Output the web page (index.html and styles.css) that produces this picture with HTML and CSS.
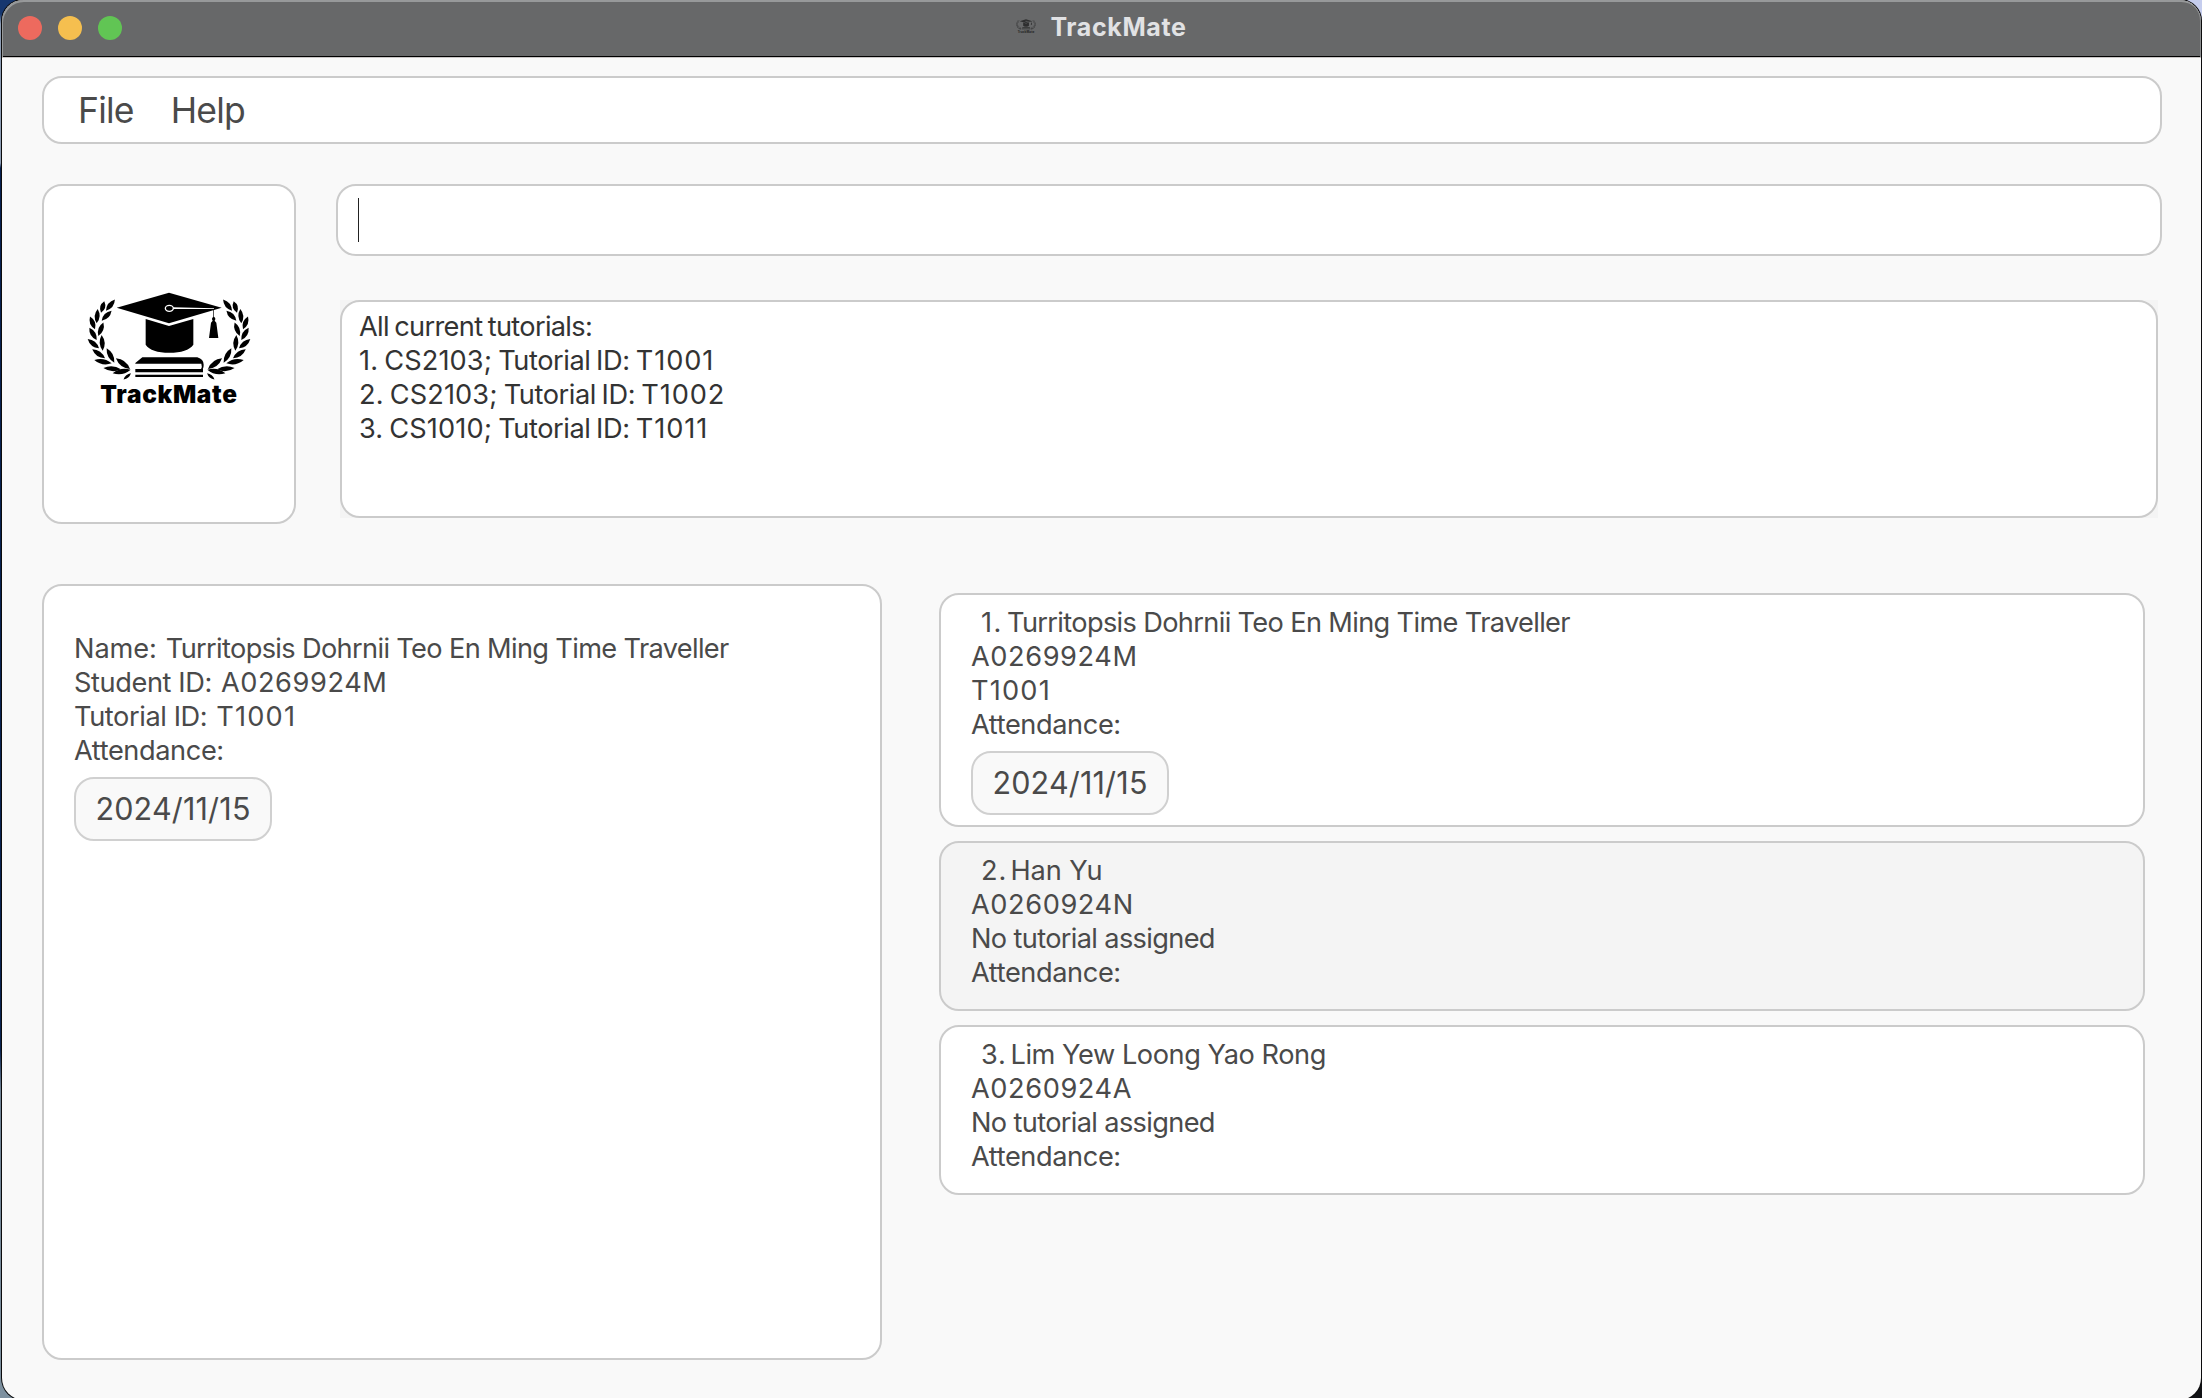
FILE: index.html
```html
<!DOCTYPE html>
<html lang="en">
<head>
<meta charset="utf-8">
<title>TrackMate</title>
<link rel="stylesheet" href="styles.css">
</head>
<body>
<svg class="defs" width="0" height="0" aria-hidden="true">
  <defs>
    <path id="leaf" d="M0 0Q50 -15 100 0Q50 15 0 0Z"/>
    <g id="branch">
      <use href="#leaf" transform="translate(138 122) rotate(-51.5) scale(.43 1)"/>
      <use href="#leaf" transform="translate(123 128) rotate(-74) scale(.36 1)"/>
      <use href="#leaf" transform="translate(125 152) rotate(-45) scale(.42 1)"/>
      <use href="#leaf" transform="translate(110 160) rotate(-86) scale(.43 1)"/>
      <use href="#leaf" transform="translate(105 178) rotate(-111.5) scale(.41 1)"/>
      <use href="#leaf" transform="translate(115 198) rotate(-69.4) scale(.43 1)"/>
      <use href="#leaf" transform="translate(110 210) rotate(-120.7) scale(.43 1)"/>
      <use href="#leaf" transform="translate(128 242) rotate(-93.7) scale(.47 1)"/>
      <use href="#leaf" transform="translate(117 235) rotate(-140.5) scale(.44 1)"/>
      <use href="#leaf" transform="translate(135 265) rotate(-144.6) scale(.47 1)"/>
      <use href="#leaf" transform="translate(163 278) rotate(-118) scale(.49 1)"/>
      <use href="#leaf" transform="translate(155 280) rotate(-169) scale(.53 1)"/>
      <use href="#leaf" transform="translate(210 297) rotate(-142.7) scale(.53 1.1)"/>
      <use href="#leaf" transform="translate(183 298) rotate(-175.7) scale(.53 1)"/>
      <use href="#leaf" transform="translate(212 299) rotate(169) scale(.55 1)"/>
      <use href="#leaf" transform="translate(213 310) rotate(140.7) scale(.29 .6)"/>
    </g>
    <symbol id="logo" viewBox="0 0 660 450">
      <use href="#branch"/>
      <use href="#branch" transform="translate(654 0) scale(-1 1)"/>
      <path d="M170 113L327 68L485 113L327 160Z"/>
      <path d="M257 147L327 168L400 147V224Q382 248 328 248Q274 248 257 224Z"/>
      <ellipse cx="328" cy="115" rx="12" ry="9" fill="none" stroke="#fff" stroke-width="4"/>
      <path d="M340 112L462 115V117L340 117Z" fill="#fff"/>
      <path d="M460 118H462V140Q467 143 466 148L464 152L469 158L475 204H447L453 158L458 152L456 148Q455 143 460 140Z"/>
      <path d="M247 262H412Q431 268 431 284Q431 300 422 300Q428 290 424 281H226V279Z"/>
      <path d="M226 297H429V307H226ZM226 314H429V321H226Z"/>
      <text class="logo-name" x="121" y="400" textLength="410">TrackMate</text>
    </symbol>
  </defs>
</svg>

<div class="window">
  <header class="titlebar">
    <div class="lights">
      <span class="light close"></span>
      <span class="light minimise"></span>
      <span class="light zoom"></span>
    </div>
    <div class="title">
      <svg class="title-icon" viewBox="80 60 494 345"><use href="#logo" width="660" height="450"/></svg>
      <span>TrackMate</span>
    </div>
  </header>

  <main class="content">
    <nav class="panel menu"><span>File</span><span>Help</span></nav>

    <div class="top">
      <div class="panel brand"><svg width="220" height="150"><use href="#logo"/></svg></div>
      <div class="console">
        <div class="panel command"><span class="caret"></span></div>
        <div class="result-area">
          <div class="panel result">
            <p class="intro">All current tutorials:</p>
            <p>1. CS2103; <span class="key">Tutorial ID:</span> <span class="value">T1001</span></p>
            <p>2. CS2103; <span class="key">Tutorial ID:</span> <span class="value">T1002</span></p>
            <p>3. CS1010; <span class="key">Tutorial ID:</span> <span class="value">T1011</span></p>
          </div>
        </div>
      </div>
    </div>

    <div class="bottom">
      <section class="panel detail">
        <div class="row"><span class="label short">Name:</span><span class="name">Turritopsis Dohrnii Teo En Ming Time Traveller</span></div>
        <div class="row"><span class="label">Student ID:</span><span class="code">A0269924M</span></div>
        <div class="row"><span class="label">Tutorial ID:</span><span class="code tutorial">T1001</span></div>
        <div class="row"><span class="label">Attendance:</span></div>
        <div class="chip">2024/11/15</div>
      </section>

      <section class="list">
        <article class="panel card tall">
          <div class="row head"><span class="index first">1.</span><span class="name">Turritopsis Dohrnii Teo En Ming Time Traveller</span></div>
          <div class="row"><span class="code">A0269924M</span></div>
          <div class="row"><span class="code tutorial">T1001</span></div>
          <div class="row"><span class="label">Attendance:</span></div>
          <div class="chip">2024/11/15</div>
        </article>
        <article class="panel card alt">
          <div class="row head"><span class="index">2.</span><span class="short">Han Yu</span></div>
          <div class="row"><span class="code">A0260924N</span></div>
          <div class="row"><span class="name">No tutorial assigned</span></div>
          <div class="row"><span class="label">Attendance:</span></div>
        </article>
        <article class="panel card">
          <div class="row head"><span class="index">3.</span><span class="medium">Lim Yew Loong Yao Rong</span></div>
          <div class="row"><span class="code">A0260924A</span></div>
          <div class="row"><span class="name">No tutorial assigned</span></div>
          <div class="row"><span class="label">Attendance:</span></div>
        </article>
      </section>
    </div>
  </main>
</div>
</body>
</html>
```

FILE: styles.css
```css
* { box-sizing: border-box; }

body {
  margin: 0;
  height: 1398px;
  overflow: hidden;
  font: 27.2px/34px Inter, "Liberation Sans", sans-serif;
  color: #4a4a4a;
  background:
    linear-gradient(#c5cdee, #c5cdee) right top / 30px 30px no-repeat,
    linear-gradient(#101114, #101114) right bottom / 30px 30px no-repeat,
    linear-gradient(#16376f 0, #16376f 14px, #8d9db4 24px, #8d9db4 163px, #06204f 168px, #0a2350 1050px, #6f8295 1090px, #7d909f 1398px);
}

p { margin: 0; }

.defs { position: absolute; }

.window {
  display: flex;
  flex-direction: column;
  width: 2199px;
  height: 1400px;
  margin-left: 2px;
  overflow: hidden;
  border-radius: 21px 21px 22px 22px;
  background: #f9f9f9;
  box-shadow: 0 0 0 1px #0b0b0c;
}

.titlebar {
  display: grid;
  grid-template-columns: 1fr auto 1fr;
  height: 58px;
  flex: none;
  padding-left: 16px;
  background: #676869;
  border-bottom: 1px solid #c9c6c6;
  border-radius: 21px 21px 0 0;
  box-shadow: inset 1px 2px 0 #97999a, inset -1px 0 0 #8b8d8e, inset 0 -1px 0 #000;
}

.lights { display: flex; gap: 16px; padding-top: 16px; }
.light { width: 24px; height: 24px; border-radius: 50%; }
.close { background: #ed6a5e; }
.minimise { background: #f5bf4f; }
.zoom { background: #61c554; }

.title {
  display: flex;
  gap: 14px;
  align-items: center;
  height: 54px;
  margin-left: -16px;
  font-size: 25px;
  font-weight: 700;
  letter-spacing: .64px;
  color: #e1e2e4;
}

.title-icon { width: 20px; height: 16px; margin-top: -3px; opacity: .55; }

.logo-name { font: 900 73px Inter, sans-serif; }

.content { padding: 18px 39px 0 40px; }

.panel {
  background: #fff;
  border: 2px solid #cbcbcb;
  border-radius: 20px;
}

.menu {
  display: flex;
  gap: 37px;
  height: 68px;
  padding-left: 34px;
  font-size: 35.5px;
  line-height: 66px;
  letter-spacing: -.8px;
}

.top { display: flex; gap: 40px; margin-top: 40px; }

.brand {
  width: 254px;
  height: 340px;
  padding: 84px 0 0 16px;
}

.brand svg { display: block; }

.console { flex: 1; }

.command { height: 72px; padding: 12px 0 0 20px; }
.caret { display: block; width: 1px; height: 44px; background: #222; }

.result-area { margin: 44px 4px 0; background: #f4f4f4; }

.result {
  height: 218px;
  padding: 8px 17px;
  color: #333;
  letter-spacing: .1px;
  word-spacing: -1.6px;
}

.intro { letter-spacing: -.68px; }
.key { letter-spacing: -.42px; }
.value { letter-spacing: .9px; }

.bottom { display: flex; gap: 57px; margin-top: 60px; }

.detail {
  width: 840px;
  height: 776px;
  padding: 46px 30px 0;
}

.row { display: flex; gap: 9px; white-space: nowrap; }
.label { letter-spacing: -.4px; }
.short { letter-spacing: -.1px; }
.medium { letter-spacing: -.45px; }
.name { letter-spacing: -.65px; }
.code { letter-spacing: .58px; }
.tutorial { letter-spacing: 1.2px; }

.chip {
  width: 198px;
  height: 64px;
  margin-top: 9px;
  border: 2px solid #d0d0d0;
  border-radius: 20px;
  background: #f9f9f9;
  font-size: 30.5px;
  line-height: 60px;
  letter-spacing: .18px;
  text-align: center;
}

.list {
  display: flex;
  flex: 1;
  flex-direction: column;
  gap: 14px;
  padding: 9px 17px 0 0;
}

.card { height: 170px; padding: 11px 30px 0; }
.tall { height: 234px; }
.alt { background: #f4f4f4; }

.head { gap: 0; padding-left: 10px; }
.index { width: 29.5px; letter-spacing: .8px; }
.first { width: 26px; letter-spacing: 1.5px; }
```
